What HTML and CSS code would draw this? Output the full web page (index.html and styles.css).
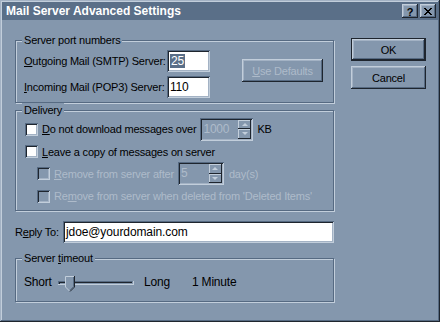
FILE: index.html
```html
<!DOCTYPE html>
<html>
<head>
<meta charset="utf-8">
<link rel="stylesheet" href="styles.css">
</head>
<body>
<div class="window">
  <div class="titlebar">
    <span class="title">Mail Server Advanced Settings</span>
    <div class="tbtns">
      <span class="tbtn help">?</span>
      <span class="tbtn close"><svg width="8" height="7" viewBox="0 0 8 7"><path d="M0 0h2v1H0zM6 0h2v1H6zM1 1h2v1H1zM5 1h2v1H5zM2 2h4v1H2zM3 3h2v1H3zM2 4h4v1H2zM1 5h2v1H1zM5 5h2v1H5zM0 6h2v1H0zM6 6h2v1H6z" fill="#000"/></svg></span>
    </div>
  </div>
  <div class="content">
    <div class="main">
      <fieldset class="group ports">
        <legend>Server port numbers</legend>
        <div class="port-grid">
          <span class="port-label"><u>O</u>utgoing Mail (SMTP) Server:</span>
          <div class="field port"><span class="sel">25</span></div>
          <div class="btn disabled defaults"><span><u>U</u>se Defaults</span></div>
          <span class="port-label"><u>I</u>ncoming Mail (POP3) Server:</span>
          <div class="field port">110</div>
        </div>
      </fieldset>

      <fieldset class="group delivery">
        <legend>Delivery</legend>
        <div class="row r1">
          <span class="check"></span>
          <span class="ctext"><u>D</u>o not download messages over</span>
          <div class="spin s1"><span class="spin-val">1000</span><span class="spin-btns"><span class="arrbtn"><span class="tri up"></span></span><span class="arrbtn"><span class="tri down"></span></span></span></div>
          <span class="unit">KB</span>
        </div>
        <div class="row r2">
          <span class="check"></span>
          <span class="ctext"><u>L</u>eave a copy of messages on server</span>
        </div>
        <div class="row r3 indent dis">
          <span class="check off"></span>
          <span class="ctext"><u>R</u>emove from server after</span>
          <div class="spin s2"><span class="spin-val">5</span><span class="spin-btns"><span class="arrbtn"><span class="tri up"></span></span><span class="arrbtn"><span class="tri down"></span></span></span></div>
          <span class="unit">day(s)</span>
        </div>
        <div class="row r4 indent dis">
          <span class="check off"></span>
          <span class="ctext">Re<u>m</u>ove from server when deleted from 'Deleted Items'</span>
        </div>
      </fieldset>

      <div class="reply">
        <span class="reply-label">R<u>e</u>ply To:</span>
        <div class="field wide">jdoe@yourdomain.com</div>
      </div>

      <fieldset class="group timeout">
        <legend>Server <u>t</u>imeout</legend>
        <div class="trow">
          <span class="short">Short</span>
          <svg class="slider" width="77" height="20" viewBox="0 0 77 20">
            <rect x="1" y="8" width="75" height="4" fill="#8497ad"/>
            <path d="M1 8.5H75.5M1.5 8V12" stroke="#566a82" stroke-width="1"/>
            <path d="M2 9.5H75M2.5 9V11" stroke="#1e252e" stroke-width="1"/>
            <path d="M1 11.5H76.5M76.5 8V12" stroke="#c2cedb" stroke-width="1"/>
            <polygon points="8,3 18,3 18,14 13,19 8,14" fill="#8497ad"/>
            <path d="M8.5 14V3.5H17" fill="none" stroke="#c2cedb" stroke-width="1"/>
            <path d="M8.5 14L12.5 18" fill="none" stroke="#c2cedb" stroke-width="1"/>
            <path d="M17.5 3V14L13 18.5" fill="none" stroke="#1e252e" stroke-width="1"/>
            <path d="M16.5 4V13.6L13 17.2" fill="none" stroke="#566a82" stroke-width="1"/>
          </svg>
          <span class="long">Long</span>
          <span class="minute">1 Minute</span>
        </div>
      </fieldset>
    </div>
    <div class="buttons">
      <div class="btn default"><span>OK</span></div>
      <div class="btn"><span>Cancel</span></div>
    </div>
  </div>
</div>
</body>
</html>
```

FILE: styles.css
```css
:root {
  --face: #8497ad;
  --title: #5a6f88;
  --light: #c2cedb;
  --light2: #a3b2c4;
  --shadow: #566a82;
  --dark: #1e252e;
  --dis: #aebbca;
}

html, body {
  margin: 0;
  padding: 0;
  background: var(--face);
}

body {
  font-family: "Liberation Sans", Arial, sans-serif;
  font-size: 11px;
  letter-spacing: -0.2px;
  color: #000;
}

u { text-decoration: underline; }

.window {
  width: 440px;
  height: 322px;
  box-sizing: border-box;
  padding: 2px;
  background: var(--face);
  box-shadow:
    inset -1px -1px 0 var(--dark),
    inset 1px 1px 0 var(--light2),
    inset -2px -2px 0 var(--shadow),
    inset 2px 2px 0 var(--light);
}

.titlebar {
  height: 18px;
  background: var(--title);
  display: flex;
  align-items: center;
  padding: 0 2px 0 4px;
}

.title {
  font-weight: bold;
  font-size: 12px;
  letter-spacing: 0;
  color: #fff;
}

.tbtns {
  margin-left: auto;
  display: flex;
  gap: 2px;
}

.tbtn {
  width: 16px;
  height: 14px;
  box-sizing: border-box;
  background: var(--face);
  display: flex;
  align-items: center;
  justify-content: center;
  box-shadow:
    inset -1px -1px 0 var(--dark),
    inset 1px 1px 0 var(--light),
    inset -2px -2px 0 var(--shadow),
    inset 2px 2px 0 var(--light2);
}

.tbtn.help {
  font-weight: bold;
  font-size: 11px;
  letter-spacing: 0;
  line-height: 14px;
  padding-top: 1px;
}

.tbtn.close svg { display: block; margin-top: 1px; }

.content {
  display: flex;
  padding: 13px 0 0 13px;
}

.main {
  width: 319px;
  display: flex;
  flex-direction: column;
}

.group {
  margin: 0;
  min-width: 0;
  box-sizing: border-box;
  width: 100%;
  border: 1px solid var(--shadow);
  box-shadow: inset 1px 1px 0 var(--light), 1px 1px 0 var(--light);
  padding: 0 8px;
}

.group legend {
  background: var(--face);
  line-height: 14px;
  padding: 0 2px;
  margin-left: -2px;
}

/* Ports */
.ports { padding-top: 3px; padding-bottom: 4px; }

.port-grid {
  display: grid;
  grid-template-columns: 143px 43px 1fr;
  grid-template-rows: 22px 22px;
  row-gap: 4px;
  align-items: center;
}

.field {
  box-sizing: border-box;
  height: 22px;
  background: #fff;
  padding: 2px 3px;
  line-height: 18px;
  box-shadow:
    inset 1px 1px 0 var(--shadow),
    inset -1px -1px 0 var(--light),
    inset 2px 2px 0 var(--dark),
    inset -2px -2px 0 var(--light2);
}

.field.port { width: 43px; font-size: 12px; }

.sel {
  background: var(--title);
  color: #fff;
  padding: 0 1px;
}

.btn {
  box-sizing: border-box;
  width: 75px;
  height: 23px;
  background: var(--face);
  display: flex;
  align-items: center;
  justify-content: center;
  box-shadow:
    inset -1px -1px 0 var(--dark),
    inset 1px 1px 0 var(--light),
    inset -2px -2px 0 var(--shadow),
    inset 2px 2px 0 var(--light2);
}

.btn.default {
  border: 1px solid var(--dark);
}

.btn.disabled { color: var(--dis); }

.defaults {
  grid-column: 3;
  grid-row: 1 / span 2;
  align-self: start;
  width: 81px;
  margin: 9px 0 0 32px;
}

/* Delivery */
.delivery { padding-top: 0; padding-bottom: 3px; }

.row {
  display: flex;
  align-items: center;
}

.r1 { height: 24px; }
.r2 { height: 21px; }
.r3 { height: 23px; }
.r4 { height: 22px; }

.check {
  width: 13px;
  height: 13px;
  box-sizing: border-box;
  flex: none;
  background: #fff;
  margin-left: 1px;
  box-shadow:
    inset 1px 1px 0 var(--shadow),
    inset -1px -1px 0 var(--light),
    inset 2px 2px 0 var(--dark),
    inset -2px -2px 0 var(--light2);
}

.check.off { background: var(--face); }

.ctext { margin-left: 4px; white-space: nowrap; }

.indent { padding-left: 12px; }

.dis { color: var(--dis); }

.spin {
  box-sizing: border-box;
  height: 23px;
  display: flex;
  padding: 2px;
  background: var(--face);
  box-shadow:
    inset 1px 1px 0 var(--shadow),
    inset -1px -1px 0 var(--light),
    inset 2px 2px 0 var(--dark),
    inset -2px -2px 0 var(--light2);
}

.s1 { width: 53px; margin-left: 4px; }
.s2 { width: 46px; margin-left: 4px; }

.spin-val {
  flex: 1;
  color: var(--dis);
  font-size: 12px;
  line-height: 19px;
  padding-left: 1px;
}

.spin-btns {
  width: 13px;
  display: flex;
  flex-direction: column;
}

.arrbtn {
  flex: 1;
  display: flex;
  align-items: center;
  justify-content: center;
  background: var(--face);
  box-shadow:
    inset -1px -1px 0 var(--dark),
    inset 1px 1px 0 var(--light);
}

.tri {
  width: 0;
  height: 0;
  border-left: 3px solid transparent;
  border-right: 3px solid transparent;
}

.tri.up { border-bottom: 3px solid var(--light); }
.tri.down { border-top: 3px solid var(--light); }

.unit { margin-left: 4px; }
.r1 .unit { color: #000; }
.r3 .unit { margin-left: 5px; }

/* Reply */
.reply {
  display: flex;
  align-items: center;
  margin-top: 10px;
}

.reply-label { width: 48px; flex: none; }

.field.wide {
  flex: 1;
  font-size: 12px;
  letter-spacing: -0.1px;
}

/* Timeout */
.timeout {
  margin-top: 8px;
  padding-top: 2px;
  padding-bottom: 4px;
}

.trow {
  height: 30px;
  display: flex;
  align-items: center;
  font-size: 12px;
}

.short { width: 33px; }
.slider { display: block; margin-top: 2px; }
.long { margin-left: 10px; width: 48px; }

/* Buttons */
.buttons {
  margin-left: 17px;
  margin-top: 5px;
  display: flex;
  flex-direction: column;
  gap: 5px;
}
```
